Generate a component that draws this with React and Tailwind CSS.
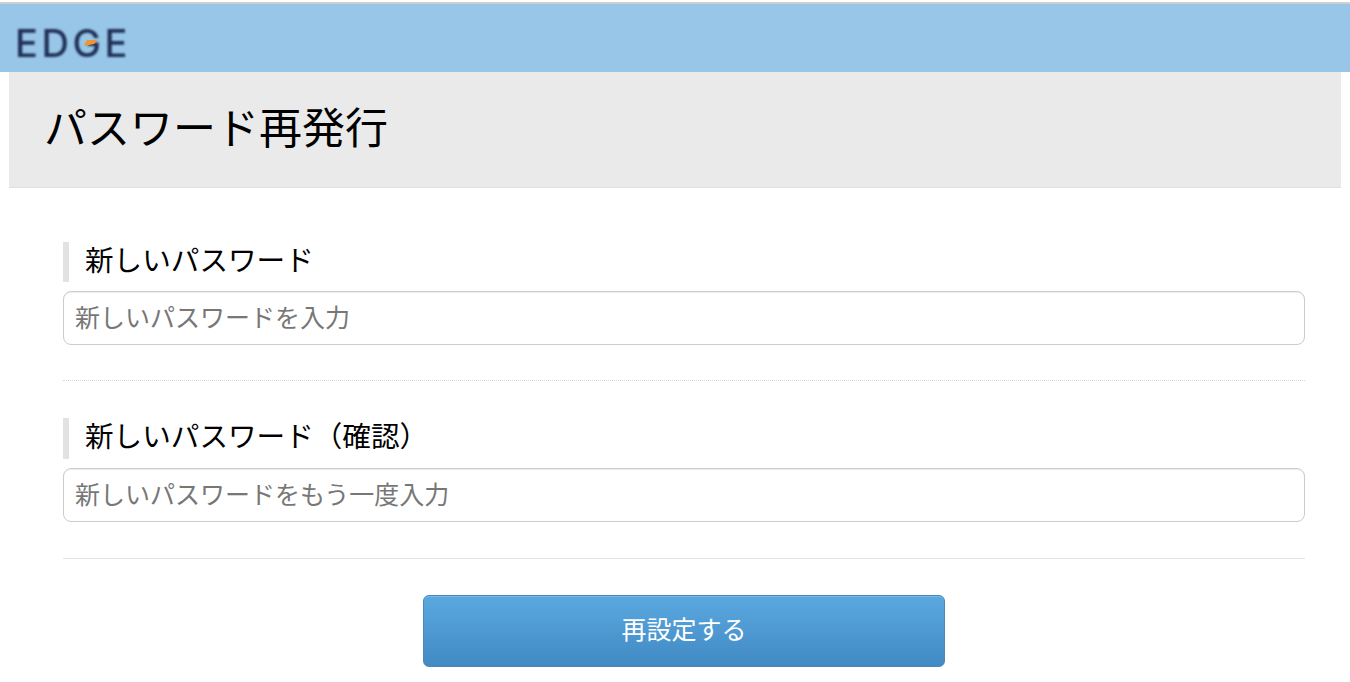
import React from 'react';

const cjk = "font-['Noto_Sans_CJK_JP','Liberation_Sans',sans-serif]";

function Logo() {
    return (
        <div className="relative ml-[15px] mt-[17px] w-[114px] h-[44px]">
            <span className="block font-['Inter',sans-serif] font-medium text-[38px] leading-[44px] tracking-[3.6px] text-[#1f2f55] blur-[0.8px]">EDGE</span>
            <svg className="absolute left-[69px] top-[19px] blur-[0.3px]" width="14" height="6" viewBox="0 0 14 6">
                <path d="M3 0 L14 0 L10 4 L0 6 Z" fill="#f0962e" />
            </svg>
        </div>
    );
}

function Field({ label, placeholder, dotted, labelHeight, ruleGap }) {
    return (
        <div>
            <h2 className={`border-l-[6px] border-[#e2e2e2] pl-[16px] ${labelHeight} text-[28.6px] leading-[34px] text-black font-normal`}>{label}</h2>
            <input
                type="password"
                placeholder={placeholder}
                className="block w-full mt-[9px] h-[54px] pl-[11px] pr-[11px] pb-[5px] bg-white border border-[#cccccc] rounded-[8px] shadow-[inset_0_1px_1px_rgba(0,0,0,0.075)] text-[25px] placeholder:text-[#777777] outline-none"
            />
            <div className={`${ruleGap} border-t ${dotted ? 'border-dotted border-[#d8d8d8]' : 'border-[#e5e5e5]'}`} />
        </div>
    );
}

export default function App() {
    return (
        <div className={`${cjk} min-h-[682px] bg-white overflow-hidden`}>
            <header className="mt-[2px] h-[70px] bg-[#98c6e8] border-t-2 border-[#cfcfcf]">
                <Logo />
            </header>
            <div className="mx-[9px] h-[116px] bg-[#eaeaea] border-b border-[#e0e0e0] pl-[35px] pb-[9px] flex items-center">
                <h1 className="text-[43px] leading-none text-black font-normal">パスワード再発行</h1>
            </div>
            <main className="ml-[63px] mr-[45px] pt-[54px] flex flex-col gap-[37px]">
                <Field label="新しいパスワード" placeholder="新しいパスワードを入力" dotted labelHeight="h-[40px]" ruleGap="mt-[35px]" />
                <Field label="新しいパスワード（確認）" placeholder="新しいパスワードをもう一度入力" labelHeight="h-[41px]" ruleGap="mt-[36px]" />
            </main>
            <div className="flex justify-center mt-[36px] pl-[18px]">
                <button className="w-[522px] h-[72px] pb-[4px] rounded-[6px] border border-[#4a87b8] bg-gradient-to-b from-[#5ba8e0] to-[#418ac4] text-white text-[25px] shadow-[inset_0_1px_0_rgba(255,255,255,0.2)]">
                    再設定する
                </button>
            </div>
        </div>
    );
}
